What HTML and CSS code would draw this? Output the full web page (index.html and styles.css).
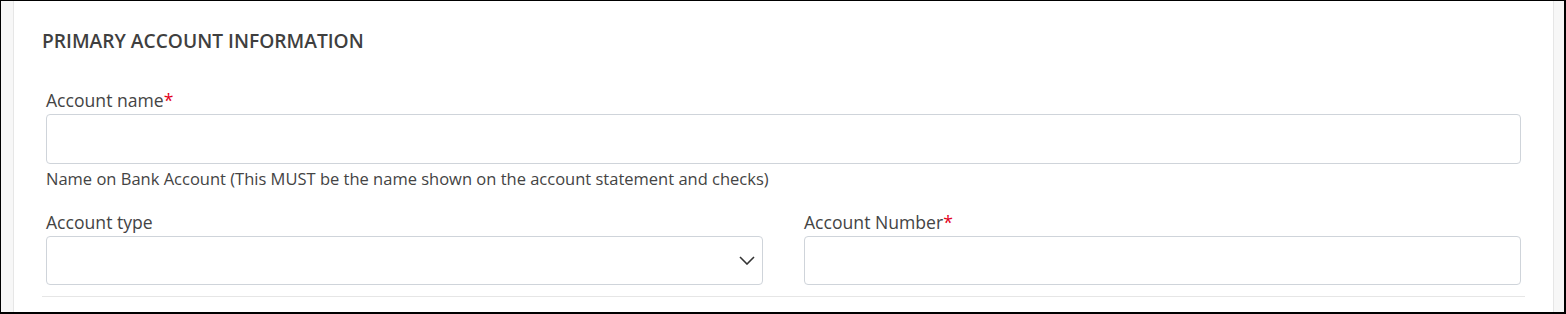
FILE: index.html
```html
<!DOCTYPE html>
<html lang="en">
<head>
  <meta charset="UTF-8" />
  <title>Primary Account Information</title>
  <link rel="stylesheet" href="styles.css">
</head>
<body>
  <div class="frame">
    <div class="card">
      <h2 class="section-title">Primary Account Information</h2>

      <div class="form-group">
        <label for="accountName">Account name<span class="req">*</span></label>
        <input type="text" id="accountName" />
        <p class="hint">Name on Bank Account (This MUST be the name shown on the account statement and checks)</p>
      </div>

      <div class="form-row">
        <div class="form-group">
          <label for="accountType">Account type</label>
          <div class="select-wrap">
            <select id="accountType">
              <option></option>
              <option>Checking</option>
              <option>Savings</option>
            </select>
            <svg class="chevron" width="16" height="9" viewBox="0 0 16 9">
              <path d="M1 1 L8 8 L15 1" fill="none" stroke="#333" stroke-width="1.6" />
            </svg>
          </div>
        </div>
        <div class="form-group">
          <label for="accountNumber">Account Number<span class="req">*</span></label>
          <input type="text" id="accountNumber" />
        </div>
      </div>

      <hr class="divider" />
    </div>
  </div>
</body>
</html>
```

FILE: styles.css
```css
* {
  box-sizing: border-box;
  margin: 0;
  padding: 0;
}

body {
  font-family: 'Open Sans', 'Noto Sans', sans-serif;
  color: #444;
  background: #fff;
}

.frame {
  height: 314px;
  border: 1px solid #000;
  border-width: 1px 2px 2px 1px;
  background: #f7f7f7;
  padding: 0 10px 0 12px;
}

.card {
  height: 100%;
  background: #fff;
  border-left: 1px solid #e6e6e6;
  border-right: 1px solid #e6e6e6;
  padding: 27px 28px 0;
}

.section-title {
  font-size: 19.2px;
  line-height: 26px;
  font-weight: 600;
  text-transform: uppercase;
  color: #3f3f3f;
  margin-bottom: 34px;
}

.form-group {
  padding: 0 4px;
}

.form-group label {
  display: block;
  font-size: 17.6px;
  line-height: 24px;
  margin-bottom: 2px;
}

.req {
  color: #e3001b;
}

.form-group input,
.form-group select {
  display: block;
  width: 100%;
  height: 50px;
  border: 1px solid #cfd4da;
  border-radius: 4px;
  background: #fff;
  font-size: 17px;
  font-family: inherit;
  padding: 0 12px;
  outline: none;
  appearance: none;
}

.form-row .form-group input,
.form-row .form-group select {
  height: 49px;
}

.hint {
  font-size: 16.5px;
  line-height: 22px;
  margin-top: 4px;
}

.form-row {
  display: grid;
  grid-template-columns: 1fr 1fr;
  column-gap: 33px;
  margin-top: 20px;
}

.select-wrap {
  position: relative;
}

.chevron {
  position: absolute;
  right: 8px;
  top: 20px;
  pointer-events: none;
}

.divider {
  border: none;
  border-top: 1px solid #e6e6e6;
  margin-top: 11px;
}
```
